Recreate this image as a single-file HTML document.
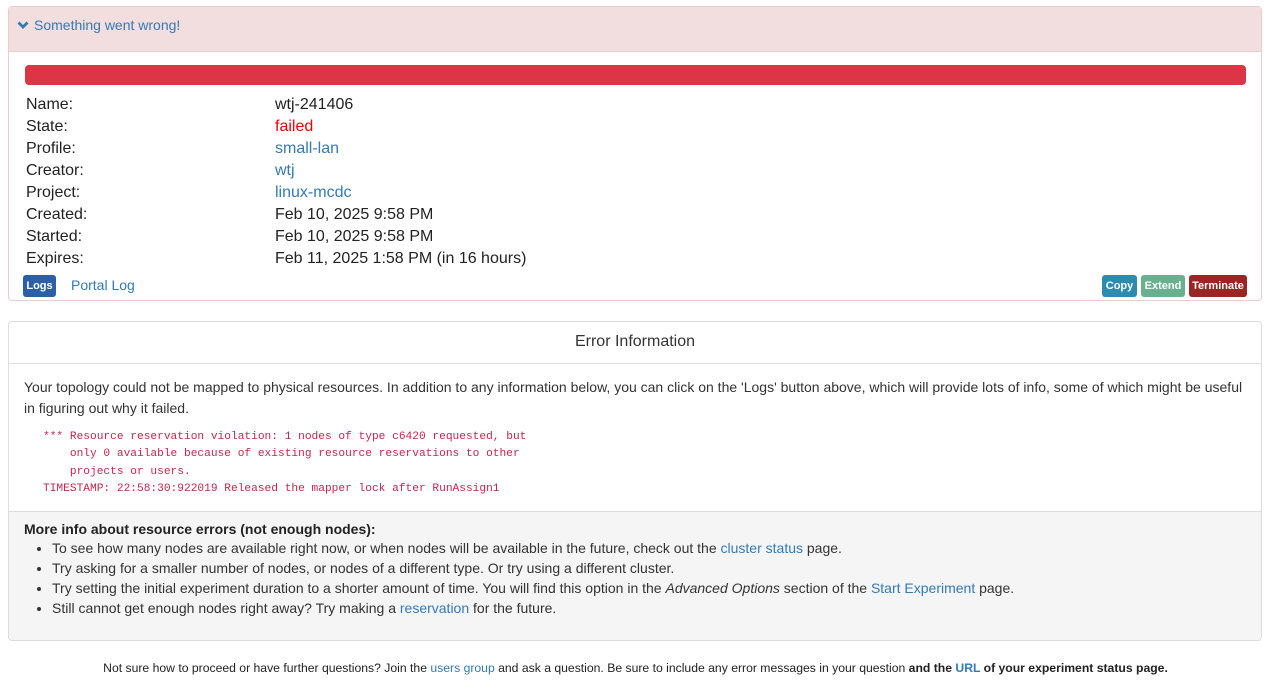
<!DOCTYPE html>
<html><head><meta charset="utf-8"><style>
*{box-sizing:border-box;margin:0;padding:0}
body{width:1271px;height:698px;background:#fff;font-family:"Liberation Sans",sans-serif;font-size:14px;color:#333;position:relative;overflow:hidden}
a{color:#337ab7;text-decoration:none}
.p1{position:absolute;left:8px;top:6px;width:1254px;height:295px;border:1px solid #ebccd1;border-radius:4px}
.h1{height:45px;background:#f2dede;border-bottom:1px solid #ebccd1;padding:9px 0 0 8px;font-size:14px;color:#337ab7;line-height:18px}
.bar{position:absolute;left:16px;top:58px;width:1221px;height:20px;background:#dc3545;border-radius:4px}
.row{position:absolute;left:17px;font-size:16px;color:#222;line-height:20px}
.val{position:absolute;left:266px;font-size:16px;line-height:20px;color:#222}
.btn{position:absolute;top:268px;height:22px;color:#fff;font-size:11px;font-weight:bold;border-radius:3px;line-height:22px;text-align:center}
.p2{position:absolute;left:8px;top:321px;width:1254px;height:320px;border:1px solid #ddd;border-radius:4px;overflow:hidden}
.h2{height:42px;border-bottom:1px solid #ddd;text-align:center;font-size:16px;line-height:40px;color:#333}
pre{font-family:"Liberation Mono",monospace;font-size:11.2px;line-height:17.3px;color:#c7254e;position:absolute;left:34px;top:107px}
.foot{position:absolute;left:0;top:189px;width:100%;height:131px;background:#f5f5f5;border-top:1px solid #ddd;padding:9px 0 0 15px}
ul{margin-left:28px;margin-top:1px}
li{line-height:20px}
</style></head><body>
<div class="p1">
<div class="h1"><svg width="12" height="10" viewBox="0 0 12 10" style="margin-right:5px;vertical-align:-0px"><path d="M1.5 2.5L6 7l4.5-4.5" stroke="#337ab7" stroke-width="2.8" fill="none"/></svg>Something went wrong!</div>
<div class="bar"></div>
<div class="row" style="top:88px">Name:</div><div class="val" style="top:88px">wtj-241406</div>
<div class="row" style="top:110px">State:</div><div class="val" style="top:110px;color:#e00">failed</div>
<div class="row" style="top:132px">Profile:</div><div class="val" style="top:132px"><a>small-lan</a></div>
<div class="row" style="top:154px">Creator:</div><div class="val" style="top:154px"><a>wtj</a></div>
<div class="row" style="top:176px">Project:</div><div class="val" style="top:176px"><a>linux-mcdc</a></div>
<div class="row" style="top:198px">Created:</div><div class="val" style="top:198px">Feb 10, 2025 9:58 PM</div>
<div class="row" style="top:220px">Started:</div><div class="val" style="top:220px">Feb 10, 2025 9:58 PM</div>
<div class="row" style="top:242px">Expires:</div><div class="val" style="top:242px">Feb 11, 2025 1:58 PM (in 16 hours)</div>
<div class="btn" style="left:14px;width:33px;background:#2c5fa8">Logs</div>
<a style="position:absolute;left:62px;top:270px;font-size:14px">Portal Log</a>
<div class="btn" style="left:1093px;width:35px;background:#2b8cb0">Copy</div>
<div class="btn" style="left:1132px;width:44px;background:#69b08f">Extend</div>
<div class="btn" style="left:1180px;width:58px;background:#9b2525">Terminate</div>
</div>
<div class="p2">
<div class="h2">Error Information</div>
<div style="position:absolute;left:15px;top:55px;width:1225px;line-height:21px">Your topology could not be mapped to physical resources. In addition to any information below, you can click on the 'Logs' button above, which will provide lots of info, some of which might be useful in figuring out why it failed.</div>
<pre>*** Resource reservation violation: 1 nodes of type c6420 requested, but
    only 0 available because of existing resource reservations to other
    projects or users.
TIMESTAMP: 22:58:30:922019 Released the mapper lock after RunAssign1</pre>
<div class="foot"><b style="color:#222">More info about resource errors (not enough nodes):</b>
<ul>
<li>To see how many nodes are available right now, or when nodes will be available in the future, check out the <a>cluster status</a> page.</li>
<li>Try asking for a smaller number of nodes, or nodes of a different type. Or try using a different cluster.</li>
<li>Try setting the initial experiment duration to a shorter amount of time. You will find this option in the <i>Advanced Options</i> section of the <a>Start Experiment</a> page.</li>
<li>Still cannot get enough nodes right away? Try making a <a>reservation</a> for the future.</li>
</ul></div>
</div>
<div style="position:absolute;left:0;top:661px;width:1271px;text-align:center;font-size:12.2px;color:#222">Not sure how to proceed or have further questions? Join the <a>users group</a> and ask a question. Be sure to include any error messages in your question <b>and the <a>URL</a> of your experiment status page.</b></div>
</body></html>
